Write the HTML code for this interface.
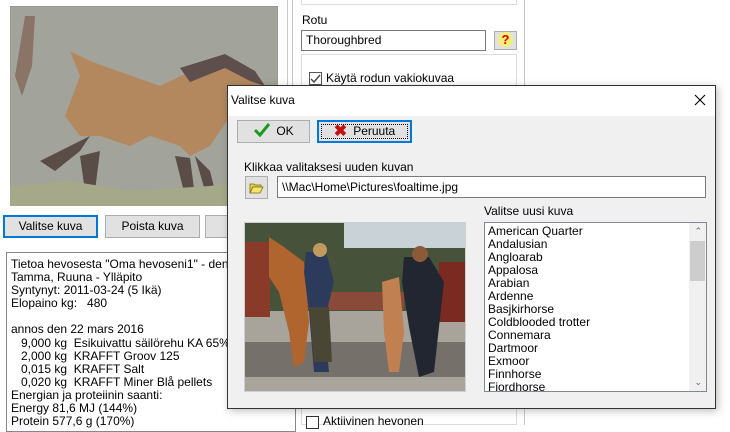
<!DOCTYPE html>
<html><head><style>
*{box-sizing:border-box;margin:0;padding:0}
body{width:730px;height:425px;overflow:hidden;background:#fff;font-family:"Liberation Sans",sans-serif;font-size:12px;color:#000;position:relative}
.a{position:absolute}
.btn{position:absolute;background:#e1e1e1;border:1px solid #adadad;text-align:center;line-height:20px}
.inp{position:absolute;background:#fff;border:1px solid #7a7a7a;padding-left:4px;line-height:18px}
.cb{position:absolute;width:13px;height:13px;border:1px solid #333;background:#fff}
</style></head><body>
<svg class="a" style="left:10px;top:6px" width="268" height="200" viewBox="0 0 268 200">
<rect width="268" height="200" fill="#9a9a90"/>
<rect x="1" y="1" width="266" height="198" fill="#a2a49b"/>
<path d="M60 45 L80 55 L150 80 L175 68 L215 52 L240 70 L255 80 L248 90 L220 110 L200 140 L180 150 L170 140 L140 130 L120 140 L90 130 L70 130 L55 110 L70 70 Z" fill="#b4885e"/>
<path d="M170 62 L215 48 L245 65 L255 80 L240 75 L215 62 L180 76 Z" fill="#5e4f4c"/>
<path d="M30 155 L60 140 L80 130 L70 145 L45 165 Z M70 150 L90 145 L85 185 L75 185 Z M165 150 L180 152 L185 190 L175 190 Z M185 150 L200 165 L205 185 L195 185 Z" fill="#5a4c47"/>
<path d="M0 180 L60 175 L120 185 L200 180 L268 170 L268 200 L0 200 Z" fill="#a6a88a"/>
<path d="M15 10 L25 10 L22 60 L12 90 L5 70 Z" fill="#8a7468"/>
</svg>
<div class="a" style="left:287px;top:0;width:1px;height:425px;background:#c8c8c8"></div>
<div class="a" style="left:292px;top:0;width:1px;height:425px;background:#c8c8c8"></div>
<div class="a" style="left:524px;top:0;width:1px;height:425px;background:#c8c8c8"></div>
<div class="a" style="left:301px;top:-1px;width:216px;height:6px;border:1px solid #dcdcdc;border-top:none"></div>
<div class="a" style="left:302px;top:13px">Rotu</div>
<div class="inp" style="left:301px;top:30px;width:185px;height:21px">Thoroughbred</div>
<div class="btn" style="left:494px;top:31px;width:23px;height:19px;line-height:17px"><span style="display:inline-block;width:15px;height:15px;border-radius:50%;background:#f4f07a;color:#d00;font-weight:bold;line-height:15px;font-size:13px">?</span></div>
<div class="a" style="left:301px;top:54px;width:216px;height:371px;border:1px solid #dcdcdc"></div>
<div class="cb" style="left:309px;top:72px;border-color:#555"><svg width="11" height="11" style="position:absolute;left:0;top:0"><path d="M1 6 L4 9 L10 2" stroke="#444" stroke-width="1.4" fill="none"/></svg></div>
<div class="a" style="left:326px;top:71px">Käytä rodun vakiokuvaa</div>
<div class="cb" style="left:306px;top:416px"></div>
<div class="a" style="left:323px;top:414px">Aktiivinen hevonen</div>
<div class="btn" style="left:3px;top:215px;width:95px;height:23px;border:2px solid #0078d7;line-height:19px">Valitse kuva</div>
<div class="btn" style="left:105px;top:215px;width:95px;height:23px">Poista kuva</div>
<div class="btn" style="left:205px;top:215px;width:95px;height:23px"></div>
<div class="a" style="left:6px;top:252px;width:290px;height:180px;border:1px solid #828790;background:#fff;padding:5px 4px;line-height:13.1px;white-space:pre;overflow:hidden">Tietoa hevosesta "Oma hevoseni1" - den 22 mars
Tamma, Ruuna - Ylläpito
Syntynyt: 2011-03-24 (5 Ikä)
Elopaino kg:   480

annos den 22 mars 2016
   9,000 kg  Esikuivattu säilörehu KA 65% RV
   2,000 kg  KRAFFT Groov 125
   0,015 kg  KRAFFT Salt
   0,020 kg  KRAFFT Miner Blå pellets
Energian ja proteiinin saanti:
Energy 81,6 MJ (144%)
Protein 577,6 g (170%)</div>
<div class="a" style="left:227px;top:85px;width:489px;height:324px;border:1px solid #333;background:#f0f0f0;box-shadow:2px 2px 8px rgba(0,0,0,.25)">
 <div class="a" style="left:0;top:0;width:487px;height:30px;background:#fff"></div>
 <div class="a" style="left:3px;top:7px;font-size:12px">Valitse kuva</div>
 <svg class="a" style="left:466px;top:8px" width="12" height="12"><path d="M1 1 L11 11 M11 1 L1 11" stroke="#000" stroke-width="1.1"/></svg>
 <div class="btn" style="left:9px;top:34px;width:73px;height:23px"><svg width="18" height="16" style="vertical-align:-3px;margin-right:5px"><path d="M2 8 L7 13 L16 2" stroke="#1a9a1a" stroke-width="3" fill="none"/></svg>OK</div>
 <div class="btn" style="left:89px;top:34px;width:95px;height:23px;border:2px solid #0078d7;line-height:19px"><span style="position:absolute;left:2px;top:2px;right:2px;bottom:2px;border:1px dotted #000"></span><span style="color:#c01010;font-weight:bold;font-size:16px;vertical-align:-1px;margin-right:6px">✖</span>Peruuta</div>
 <div class="a" style="left:16px;top:74px">Klikkaa valitaksesi uuden kuvan</div>
 <div class="btn" style="left:17px;top:90px;width:23px;height:23px"><svg width="15" height="12" style="margin-top:5px"><path d="M1 2 L5 2 L6 3 L12 3 L12 5 L4 5 L1 11 Z" fill="#e8d040" stroke="#7a6a10" stroke-width=".8"/><path d="M4 5 L14 5 L11 11 L1 11 Z" fill="#f4e56a" stroke="#7a6a10" stroke-width=".8"/></svg></div>
 <div class="inp" style="left:49px;top:90px;width:429px;height:22px;line-height:20px">\\Mac\Home\Pictures\foaltime.jpg</div>
 <div class="a" style="left:256px;top:118px">Valitse uusi kuva</div>
 <svg class="a" style="left:16px;top:136px" width="222" height="170" viewBox="0 0 222 170">
  <rect width="222" height="170" fill="#cfcfd0"/>
  <rect x="1" y="1" width="220" height="168" fill="#a9a49b"/>
  <rect x="1" y="1" width="220" height="88" fill="#46523a"/>
  <rect x="100" y="1" width="121" height="25" fill="#c9d2d6"/>
  <rect x="1" y="120" width="220" height="35" fill="#75706a"/>
  <rect x="1" y="155" width="220" height="14" fill="#aaa59c"/>
  <rect x="195" y="40" width="26" height="60" fill="#7a2a20"/>
  <rect x="1" y="20" width="25" height="75" fill="#8a3a28"/>
  <rect x="60" y="70" width="100" height="18" fill="#8a4a3a"/>
  <path d="M25 15 L40 25 L60 40 L65 100 L60 140 L50 145 L45 110 L35 70 L25 55 Z" fill="#b0642e"/>
  <path d="M62 30 L82 30 L90 60 L80 100 L85 150 L70 150 L65 90 L60 50 Z" fill="#2c3a5c"/>
  <path d="M65 85 L85 85 L88 140 L70 140 Z" fill="#4a4636"/>
  <path d="M138 60 L155 55 L160 110 L155 150 L145 150 L140 110 Z" fill="#c08050"/>
  <path d="M160 35 L185 35 L200 60 L195 105 L190 150 L175 155 L165 105 L158 60 Z" fill="#222631"/>
  <circle cx="176" cy="32" r="8" fill="#8a5a3a"/><circle cx="76" cy="28" r="7" fill="#c09a60"/>
 </svg>
 <div class="a" style="left:256px;top:136px;width:223px;height:170px;border:1px solid #828790;background:#fff;overflow:hidden">
  <div style="padding:2px 0 0 3px;line-height:13px">American Quarter<br>Andalusian<br>Angloarab<br>Appalosa<br>Arabian<br>Ardenne<br>Basjkirhorse<br>Coldblooded trotter<br>Connemara<br>Dartmoor<br>Exmoor<br>Finnhorse<br>Fjordhorse</div>
  <div class="a" style="right:0;top:0;width:17px;height:168px;background:#f0f0f0"></div>
  <div class="a" style="right:1px;top:18px;width:15px;height:40px;background:#cdcdcd"></div>
  <div class="a" style="right:4px;top:3px;font-size:9px;color:#606060">&#8963;</div>
  <div class="a" style="right:4px;bottom:3px;font-size:9px;color:#606060">&#8964;</div>
 </div>
</div>
</body></html>
